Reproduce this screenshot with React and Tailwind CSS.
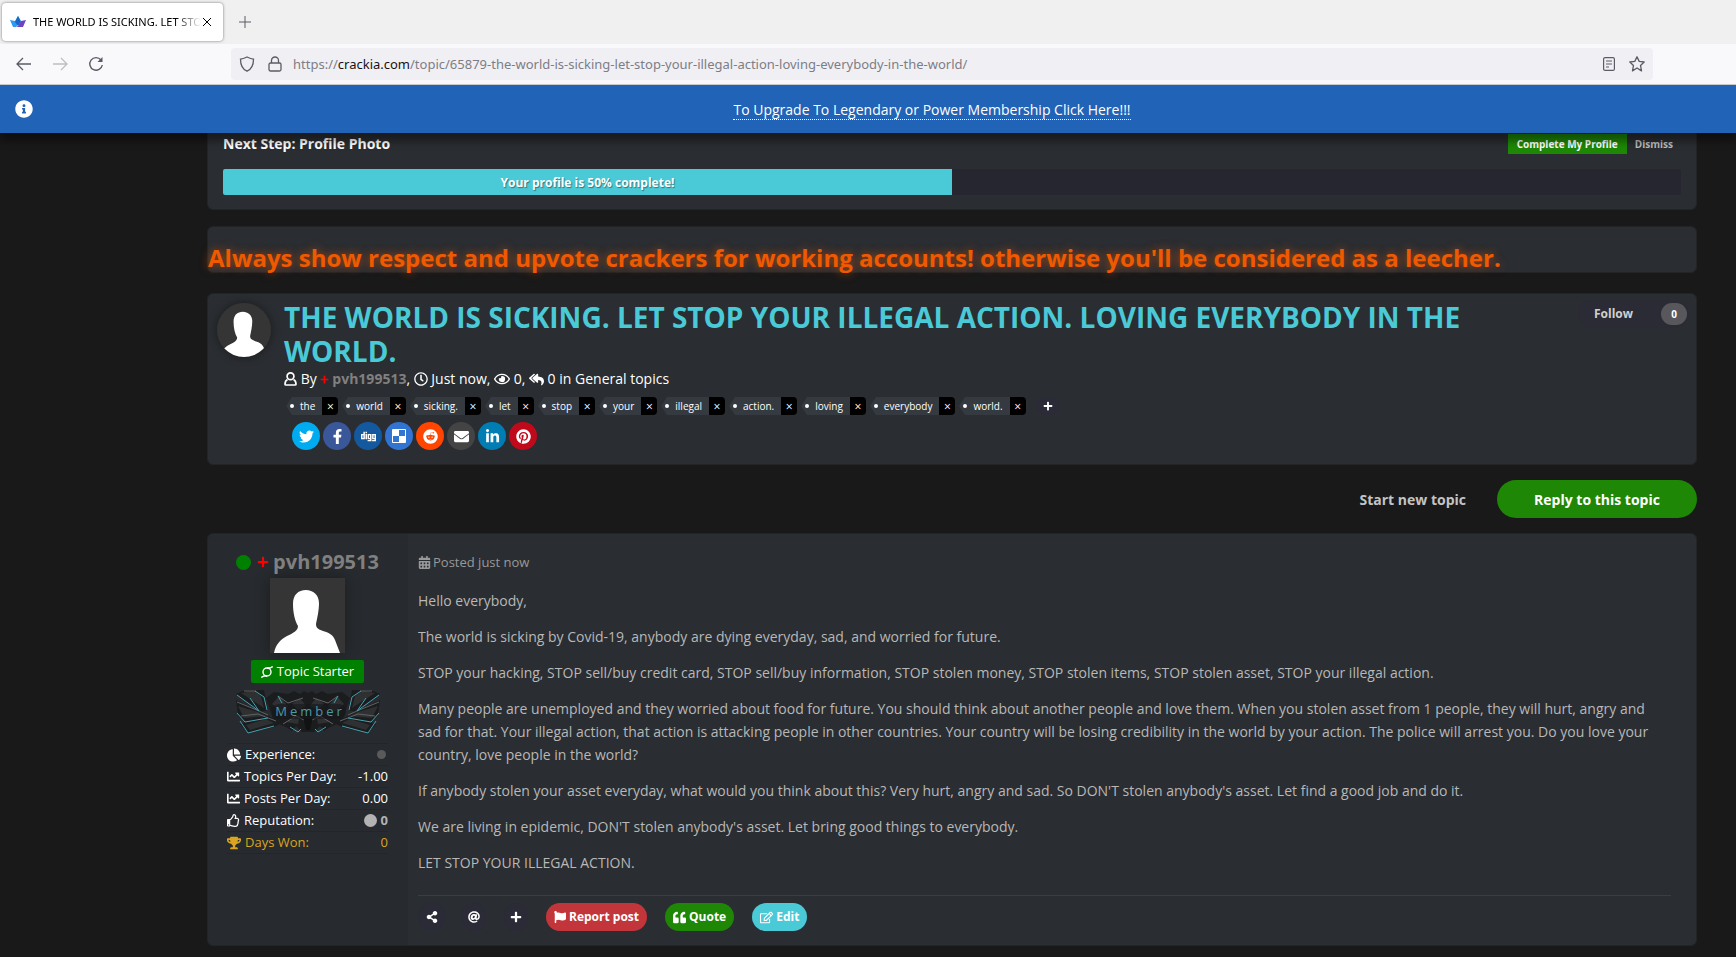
import {
  FaInfoCircle,
  FaRegClock,
  FaRegEye,
  FaReplyAll,
  FaTwitter,
  FaFacebookF,
  FaDigg,
  FaReddit,
  FaEnvelope,
  FaLinkedinIn,
  FaPinterest,
  FaChartPie,
  FaChartLine,
  FaRegThumbsUp,
  FaTrophy,
  FaShareAlt,
  FaAt,
  FaPlus,
  FaFlag,
  FaQuoteLeft,
  FaRegEdit,
  FaCalendarAlt,
} from "react-icons/fa";

const tags = ["the", "world", "sicking.", "let", "stop", "your", "illegal", "action.", "loving", "everybody", "world."];

const DeliciousIcon = () => (
  <svg width="14" height="14" viewBox="0 0 14 14">
    <rect width="14" height="14" rx="1" fill="#fff" />
    <rect x="7" y="1" width="6" height="6" fill="#3274d1" />
    <rect x="1" y="7" width="6" height="6" fill="#3274d1" />
  </svg>
);

const shares = [
  { name: "Twitter", color: "bg-[#00abf0]", icon: <FaTwitter size={15} /> },
  { name: "Facebook", color: "bg-[#3a579a]", icon: <FaFacebookF size={15} /> },
  { name: "Digg", color: "bg-[#14589e]", icon: <FaDigg size={15} /> },
  { name: "Delicious", color: "bg-[#3274d1]", icon: <DeliciousIcon /> },
  { name: "Reddit", color: "bg-[#ff4500]", icon: <FaReddit size={15} /> },
  { name: "Email", color: "bg-[#444444]", icon: <FaEnvelope size={15} /> },
  { name: "LinkedIn", color: "bg-[#007eb3]", icon: <FaLinkedinIn size={15} /> },
  { name: "Pinterest", color: "bg-[#c00a1b]", icon: <FaPinterest size={15} /> },
];

const paragraphs = [
  "Hello everybody,",
  "The world is sicking by Covid-19, anybody are dying everyday, sad, and worried for future.",
  "STOP your hacking, STOP sell/buy credit card, STOP sell/buy information, STOP stolen money, STOP stolen items, STOP stolen asset, STOP your illegal action.",
  "Many people are unemployed and they worried about food for future. You should think about another people and love them. When you stolen asset from 1 people, they will hurt, angry and sad for that. Your illegal action, that action is attacking people in other countries. Your country will be losing credibility in the world by your action. The police will arrest you. Do you love your country, love people in the world?",
  "If anybody stolen your asset everyday, what would you think about this? Very hurt, angry and sad. So DON'T stolen anybody's asset. Let find a good job and do it.",
  "We are living in epidemic, DON'T stolen anybody's asset. Let bring good things to everybody.",
  "LET STOP YOUR ILLEGAL ACTION.",
];

const Card = ({ className, children }) => (
  <section className={`rounded-md border border-[#222426] bg-[#2a2d31] ${className}`}>{children}</section>
);

/* Default silhouette used when a member has no photo */
const Avatar = ({ className }) => (
  <svg viewBox="0 0 75 75" className={className} role="img" aria-label="pvh199513">
    <rect width="75" height="75" fill="#353535" />
    <path
      d="M36 12C43 12 49 17 49 25C49 33 47 41 46 46C46 50 48 51 53 53C60 55 63 57 65 62L70 75H4C6 66 10 62 17 58C23 55 28 53 28 48C25 43 23 35 23 26C23 17 28 12 36 12Z"
      fill="#fff"
    />
  </svg>
);

const UserIcon = () => (
  <svg width="13" height="14" viewBox="0 0 13 14" fill="none" stroke="#fff" strokeWidth="1.7">
    <circle cx="6.500" cy="4.300" r="3.400" />
    <path d="M3.500 7.500C1.500 8.500 1 10 1 12.200C1 12.800 1.300 13 2 13H11C11.700 13 12 12.800 12 12.200C12 10 11.500 8.500 9.500 7.500" />
  </svg>
);

const EmblemWing = () => (
  <>
    <g fill="#1b1c1e">
      <path d="M0 4L9 0H28L30 10L32 20L24 22Z" />
      <path d="M0 10L24 22L34 27L40 30L10 32L2 26Z" />
      <path d="M4 34L32 26L46 33L38 37L12 43Z" />
      <path d="M30 8L38 2L52 4L58 1L64 4L68 1L72 3V42L66 42L60 36L56 41L50 37L38 32Z" />
    </g>
    <g fill="#2e3032">
      <path d="M5 3L18 1L25 6L28 18Z" />
      <path d="M2 16L22 22L30 26L8 28Z" />
      <path d="M36 14L43 6L52 16L46 22Z" />
      <path d="M56 14L64 8L70 16L62 20Z" />
      <path d="M50 32L64 24L62 34Z" />
      <path d="M10 35L30 29L38 33L14 40Z" />
    </g>
    <g fill="none" stroke="#606366">
      <path d="M8 1H20" />
      <path d="M1 12L23 21L32 25" />
      <path d="M5 26L22 24L40 31" />
      <path d="M42 6L52 13L67 8" />
      <path d="M47 34L60 26L70 31" />
    </g>
    <g fill="none" stroke="#46a2b0">
      <path d="M19 1L28 7L31 20" />
      <path d="M1 5L23 21L14 8" />
      <path d="M1 23L9 32L32 28" />
      <path d="M4 31L12 43L38 36" />
      <path d="M42 6L46 13M54 37L62 42L65 39" />
    </g>
  </>
);

const RankEmblem = () => (
  <svg width="144" height="44" viewBox="0 0 144 44" className="mx-auto mt-[7px]">
    <EmblemWing />
    <g transform="translate(144 0) scale(-1 1)">
      <EmblemWing />
    </g>
    <path d="M66 22L78 22L74 40L70 40Z" fill="#111213" />
    <rect x="36" y="14" width="74" height="15" rx="7" fill="#16181a" fillOpacity="0.6" />
    <text x="74" y="26" textAnchor="middle" fontSize="13" letterSpacing="3" fill="#4a9aa8">
      Member
    </text>
  </svg>
);

const BrowserChrome = () => (
  <header className="font-['Noto_Sans',sans-serif] text-[#5b5b66]">
    <div className="flex h-[44px] items-center bg-[#f0f0f0] pl-[2px]">
      <div className="flex h-[38px] w-[221px] items-center rounded bg-white pl-2 shadow-[0_0_3px_rgba(0,0,0,0.5)]">
        <svg width="16" height="16" viewBox="0 0 16 16">
          <path d="M0 6L5 7L8 2L11 7L6 13H3Z" fill="#2e9bf0" />
          <path d="M5 8L8 2L11 8L8 12Z" fill="#1668c7" />
          <path d="M8 12L11 7L16 6L13 13H6Z" fill="#6f42c1" />
        </svg>
        <span className="ml-[7px] w-[168px] bg-linear-to-r from-black from-85% to-transparent bg-clip-text pt-px text-[11px] whitespace-nowrap text-transparent">
          THE WORLD IS SICKING. LET STO
        </span>
        <button aria-label="Close tab" className="ml-[2px] text-black">
          <svg width="8" height="8" viewBox="0 0 8 8" stroke="currentColor">
            <path d="M0 0L8 8M8 0L0 8" />
          </svg>
        </button>
      </div>
      <button aria-label="New tab" className="ml-4">
        <svg width="12" height="12" viewBox="0 0 12 12" stroke="currentColor">
          <path d="M6 0V12M0 6H12" />
        </svg>
      </button>
    </div>
    <div className="flex h-[41px] items-center border-b border-[#cccccf] bg-[#f9f9fb]">
      <div className="flex w-[231px] shrink-0 items-center gap-5 pl-4">
        <button aria-label="Back">
          <svg width="16" height="16" viewBox="0 0 16 16" fill="none" stroke="currentColor" strokeWidth="1.3">
            <path d="M7 2L1 8L7 14M1 8H15" />
          </svg>
        </button>
        <button aria-label="Forward" className="text-[#bdbdc2]">
          <svg width="16" height="16" viewBox="0 0 16 16" fill="none" stroke="currentColor" strokeWidth="1.3">
            <path d="M9 2L15 8L9 14M15 8H1" />
          </svg>
        </button>
        <button aria-label="Reload">
          <svg width="16" height="16" viewBox="0 0 16 16" fill="none" stroke="currentColor" strokeWidth="1.4">
            <path d="M13 4A6.300 6.300 0 1 0 14.300 9" />
            <path d="M14.500 1V6H9.500Z" fill="currentColor" stroke="none" />
          </svg>
        </button>
      </div>
      <div className="mr-[83px] flex h-8 flex-1 items-center rounded bg-[#f0f0f4] px-2">
        <svg width="16" height="16" viewBox="0 0 16 16" fill="none" stroke="currentColor" strokeWidth="1.3">
          <path d="M8 1C6 2 4 3 1.500 3.200C1.500 9 3 13 8 15.200C13 13 14.500 9 14.500 3.200C12 3 10 2 8 1Z" />
        </svg>
        <svg width="14" height="16" viewBox="0 0 14 16" fill="none" stroke="currentColor" strokeWidth="1.3" className="ml-[13px]">
          <rect x="1" y="7" width="12" height="8" rx="1.500" />
          <path d="M3.500 7V4.500A3.500 3.500 0 0 1 10.500 4.500V7" />
        </svg>
        <div role="textbox" aria-label="Address" className="ml-[11px] flex-1 truncate pt-[2px] text-[13px] text-[#7d7d87]">
          https://<span className="text-[#15141a]">crackia.com</span>
          /topic/65879-the-world-is-sicking-let-stop-your-illegal-action-loving-everybody-in-the-world/
        </div>
        <button aria-label="Reader view">
          <svg width="12" height="14" viewBox="0 0 12 14" fill="none" stroke="currentColor" strokeWidth="1.2">
            <rect x="0.600" y="0.600" width="10.800" height="12.800" rx="1.500" />
            <path d="M3 4H9M3 7H9M3 10H6" />
          </svg>
        </button>
        <button aria-label="Bookmark" className="ml-[14px]">
          <svg width="16" height="16" viewBox="0 0 16 16" fill="none" stroke="currentColor" strokeWidth="1.3" strokeLinejoin="round">
            <path d="M8 0.800L10.200 5.400L15.200 6L11.500 9.400L12.500 14.900L8 12L3.500 14.900L4.500 9.400L0.800 6L5.800 5.400Z" />
          </svg>
        </button>
      </div>
    </div>
  </header>
);

const Tag = ({ label }) => (
  <li className="flex h-[18px] text-[10px] leading-[18px] text-white">
    <svg width="8" height="18" viewBox="0 0 8 18">
      <path d="M8 0H6L0 9L6 18H8Z" fill="#343a40" />
      <circle cx="6" cy="9" r="2" fill="#fff" />
    </svg>
    <a href="#tag" className="bg-[#343a40] pr-[7px] pl-[6px]">
      {label}
    </a>
    <button aria-label={`Remove ${label}`} className="w-4 rounded-r bg-black text-xs leading-5">
      ×
    </button>
  </li>
);

const StatRow = ({ icon, label, children, className = "text-white" }) => (
  <li className={`flex h-[22px] items-center border-b border-[#232629] text-[13px] ${className}`}>
    <span className="mr-1">{icon}</span>
    {label}
    <span className="ml-auto flex items-center gap-1">{children}</span>
  </li>
);

const AuthorPanel = () => (
  <aside className="w-[200px] shrink-0 rounded-l-md bg-[#272a2e] pt-[14px] pr-5 pl-[19px] text-center">
    <h3 className="flex items-center justify-center text-xl leading-7 font-bold text-[#808080]">
      <span className="mr-[6px] size-[15px] rounded-full bg-[#008000]" />
      <FaPlus size={12} className="mr-1 text-[#ff0000]" />
      pvh199513
    </h3>
    <Avatar className="mx-auto mt-[2px] size-[75px] shadow-[0_0_14px_rgba(0,0,0,0.3)]" />
    <p className="mx-auto mt-[7px] flex h-[23px] w-[113px] items-center justify-center rounded-xs bg-[#008000] pt-px text-[13px] text-white">
      <svg width="12" height="12" viewBox="0 0 12 12" fill="none" stroke="#fff" strokeWidth="1.4" className="mr-1">
        <circle cx="6" cy="6" r="4" />
        <path d="M6 2H9L11.700 0.500M6 10H3L0.300 11.500" />
      </svg>
      Topic Starter
    </p>
    <RankEmblem />
    <ul className="mt-[9px] border-t border-[#232629]">
      <StatRow icon={<FaChartPie size={14} />} label="Experience:">
        <span className="mr-[2px] size-[9px] rounded-full bg-[#5a5a5a]" />
      </StatRow>
      <StatRow icon={<FaChartLine size={13} />} label="Topics Per Day:">
        -1.00
      </StatRow>
      <StatRow icon={<FaChartLine size={13} />} label="Posts Per Day:">
        0.00
      </StatRow>
      <StatRow icon={<FaRegThumbsUp size={13} />} label="Reputation:">
        <span className="size-[13px] rounded-full bg-[#b3b3b3]" />
        <b className="text-[#b3b3b3]">0</b>
      </StatRow>
      <StatRow icon={<FaTrophy size={14} />} label="Days Won:" className="text-[#daa520]">
        0
      </StatRow>
    </ul>
  </aside>
);

const roundButton = "flex h-7 items-center justify-center rounded-full bg-[#2b2b38] text-white";
const pillButton = "flex h-7 items-center gap-[3px] rounded-full px-2 text-[12px] font-bold text-white";

const App = () => {
  return (
    <div className="min-h-screen bg-[#191919] font-['Open_Sans',sans-serif]">
      <BrowserChrome />

      {/* Announcement */}
      <div className="relative z-10 flex h-12 items-center bg-[#2163b7] px-[15px] text-white shadow-[0_8px_8px_rgba(0,0,0,0.4)]">
        <FaInfoCircle size={18} />
        <p className="flex-1 pt-px pl-[110px] text-center text-sm">
          <a href="#upgrade" className="border-b border-dotted border-white">
            To Upgrade To Legendary or Power Membership Click Here!!!
          </a>
        </p>
      </div>

      <main className="pr-[39px] pb-[11px] pl-[207px]">
        {/* Profile progress */}
        <Card className="rounded-t-none border-t-0 px-[15px] pt-px pb-[14px]">
          <div className="flex h-5 items-center">
            <h2 className="flex-1 text-sm font-bold text-white">Next Step: Profile Photo</h2>
            <button className="h-5 bg-[#1e8705] px-[9px] text-[10px] font-bold text-white">Complete My Profile</button>
            <button className="px-2 text-[10px] font-bold text-[#bbbbbb]">Dismiss</button>
          </div>
          <div className="mt-[15px] h-[26px] rounded-xs bg-[#262630]">
            <div className="flex h-full w-1/2 items-center justify-center rounded-l-xs bg-[#4ac9d6] pt-px text-xs font-bold text-white [text-shadow:1px_1px_1px_rgba(0,0,0,0.4)]">
              Your profile is 50% complete!
            </div>
          </div>
        </Card>

        {/* Notice */}
        <Card className="mt-4 h-[47px] pt-[15px]">
          <p className="text-2xl leading-8 font-bold text-[#ef5a00] [text-shadow:0_0_10px_rgba(239,90,0,0.7)]">
            Always show respect and upvote crackers for working accounts! otherwise you'll be considered as a leecher.
          </p>
        </Card>

        {/* Topic header */}
        <Card className="mt-5 flex px-[9px] pt-[6px] pb-[14px]">
          <Avatar className="mt-[3px] size-[54px] shrink-0 rounded-full shadow-[0_0_10px_rgba(0,0,0,0.4)]" />
          <div className="ml-[13px] flex-1">
            <h1 className="text-[28px] leading-[34px] font-bold text-[#4ac9d6]">
              THE WORLD IS SICKING. LET STOP YOUR ILLEGAL ACTION. LOVING EVERYBODY IN THE WORLD.
            </h1>
            <p className="mt-px flex items-center text-sm leading-5 whitespace-pre text-white">
              <UserIcon /> By <FaPlus size={9} className="mr-[3px] text-[#ff0000]" />
              <a href="#member" className="font-bold text-[#808080]">
                pvh199513
              </a>
              , <FaRegClock size={14} /> Just now, <FaRegEye size={16} /> 0, <FaReplyAll size={15} /> 0 in{" "}
              <a href="#general">General topics</a>
            </p>
            <ul className="mt-2 flex flex-wrap gap-1 pl-[2px]">
              {tags.map((tag) => (
                <Tag key={tag} label={tag} />
              ))}
              <li>
                <button aria-label="Add tag" className="ml-[6px] flex h-[18px] w-6 items-center justify-center rounded-full bg-[#2b2b38] text-white">
                  <FaPlus size={10} />
                </button>
              </li>
            </ul>
            <div className="mt-[7px] flex gap-[3px] pl-2 text-white">
              {shares.map((share) => (
                <a key={share.name} href="#share" aria-label={share.name} className={`flex size-7 items-center justify-center rounded-full ${share.color}`}>
                  {share.icon}
                </a>
              ))}
            </div>
          </div>
          <div className="-mr-[2px] ml-[88px] flex h-7 w-[111px] items-center rounded-full bg-[#2b2b35] pr-[2px] pl-4">
            <button className="flex-1 text-left text-xs font-bold text-[#d0d0d0]">Follow</button>
            <span className="flex h-[22px] w-[26px] items-center justify-center rounded-full bg-[#58585c] text-[10px] font-bold text-white">0</span>
          </div>
        </Card>

        <div className="my-[15px] flex items-center justify-end gap-[31px] text-sm font-bold">
          <button className="pt-px text-[#c4c4c4]">Start new topic</button>
          <button className="h-[38px] w-[200px] rounded-full bg-[#1e8705] pt-px text-white">Reply to this topic</button>
        </div>

        {/* Post */}
        <Card className="flex">
          <AuthorPanel />
          <article className="flex-1 pt-[18px] pr-[25px] pb-[14px] pl-[10px]">
            <p className="flex items-center gap-[2px] text-[13px] leading-5 text-[#999999]">
              <FaCalendarAlt size={13} /> Posted just now
            </p>
            <div className="mt-[17px] space-y-[13px] text-sm leading-[23px] text-[#b8b8b8]">
              {paragraphs.map((text) => (
                <p key={text}>{text}</p>
              ))}
            </div>
            <div className="mt-[21px] flex border-t border-[#3a3d41] pt-[7px]">
              <button aria-label="Share" className={`w-7 ${roundButton}`}>
                <FaShareAlt size={12} />
              </button>
              <button aria-label="Mention" className={`ml-4 w-6 ${roundButton}`}>
                <FaAt size={12} />
              </button>
              <button aria-label="Multiquote" className={`ml-[18px] w-6 ${roundButton}`}>
                <FaPlus size={12} />
              </button>
              <button className={`ml-[18px] bg-[#c2363b] ${pillButton}`}>
                <FaFlag size={12} /> Report post
              </button>
              <button className={`ml-[18px] bg-[#1e8705] ${pillButton}`}>
                <FaQuoteLeft size={13} /> Quote
              </button>
              <button className={`ml-[18px] bg-[#4ac9d6] ${pillButton}`}>
                <FaRegEdit size={13} /> Edit
              </button>
            </div>
          </article>
        </Card>
      </main>
    </div>
  );
};

export default App;
